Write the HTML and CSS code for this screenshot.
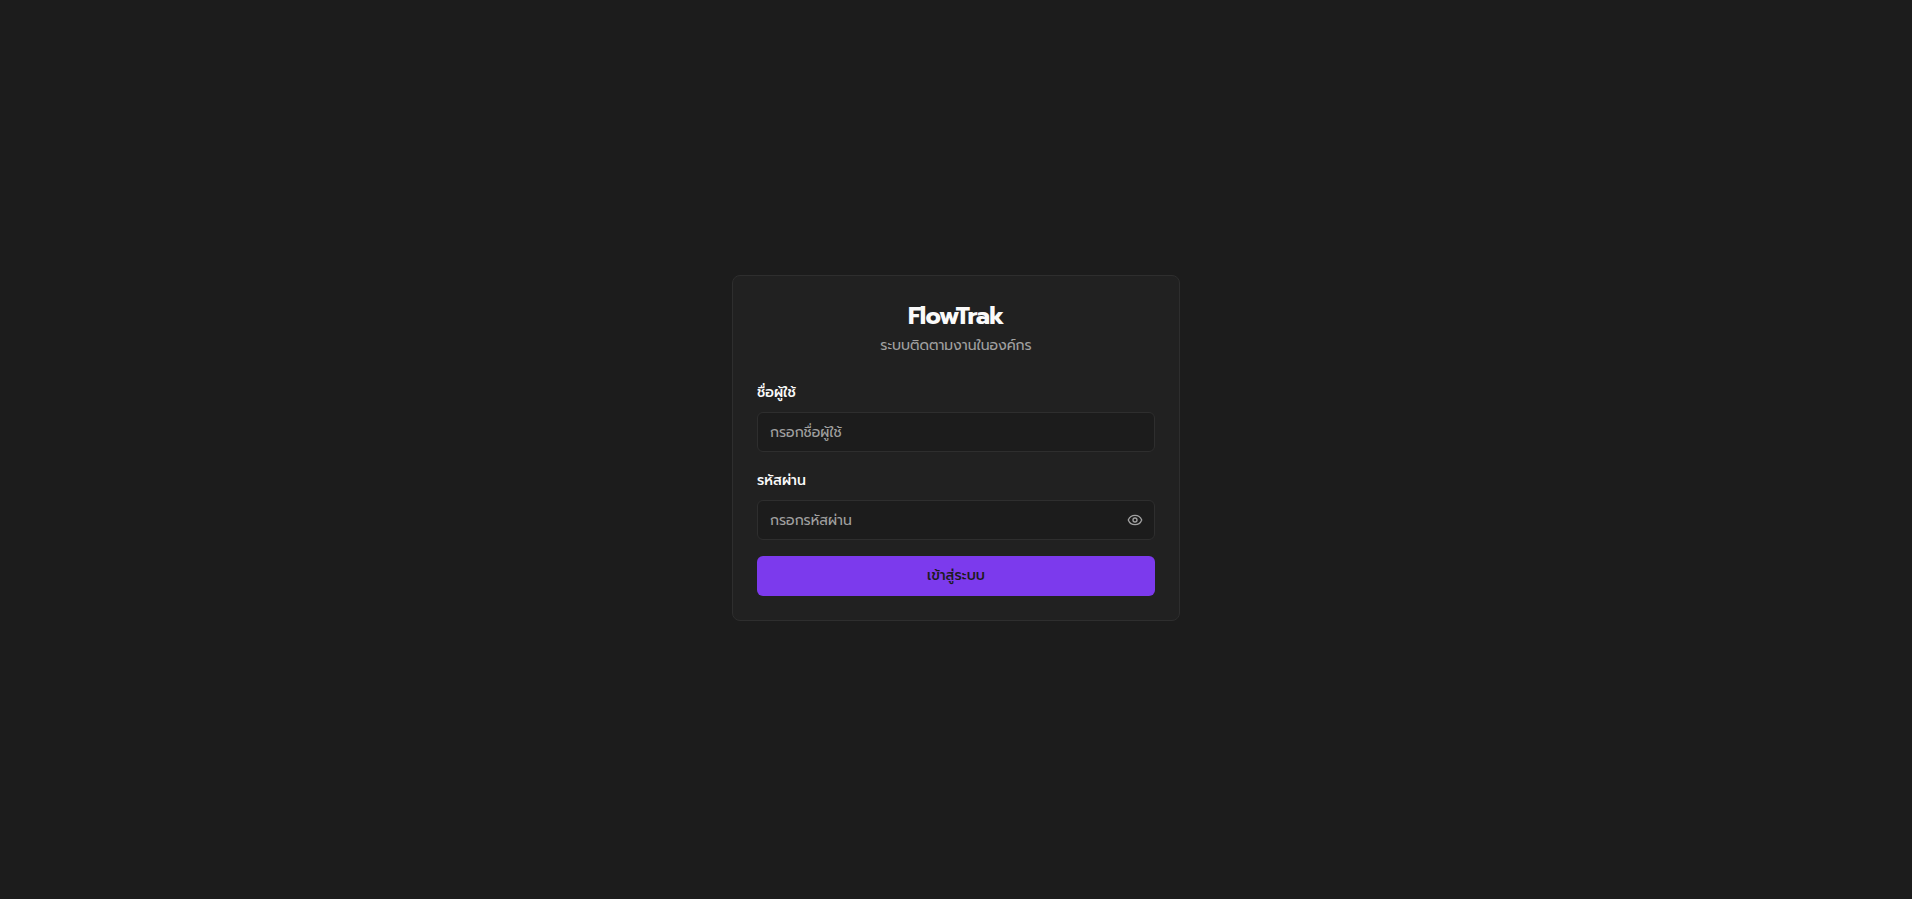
FILE: index.html
```html
<!DOCTYPE html>
<html lang="th">
<head>
    <meta charset="UTF-8">
    <meta name="viewport" content="width=device-width, initial-scale=1.0">
    <title>FlowTrak</title>
    <link rel="stylesheet" href="styles.css">
</head>
<body>
    <main class="login-card">
        <header class="login-header">
            <h1>FlowTrak</h1>
            <p>ระบบติดตามงานในองค์กร</p>
        </header>
        <form class="login-form">
            <div class="field">
                <label for="username">ชื่อผู้ใช้</label>
                <input type="text" id="username" name="username" placeholder="กรอกชื่อผู้ใช้" autocomplete="username">
            </div>
            <div class="field">
                <label for="password">รหัสผ่าน</label>
                <div class="password-box">
                    <input type="password" id="password" name="password" placeholder="กรอกรหัสผ่าน" autocomplete="current-password">
                    <button type="button" class="toggle-password" aria-label="แสดงรหัสผ่าน">
                        <svg width="16" height="16" viewBox="0 0 24 24" fill="none" stroke="currentColor" stroke-width="2" stroke-linecap="round" stroke-linejoin="round">
                            <path d="M2.062 12.348a1 1 0 0 1 0-.696 10.75 10.75 0 0 1 19.876 0 1 1 0 0 1 0 .696 10.75 10.75 0 0 1-19.876 0"/>
                            <circle cx="12" cy="12" r="3"/>
                        </svg>
                    </button>
                </div>
            </div>
            <button type="submit" class="submit-button">เข้าสู่ระบบ</button>
        </form>
    </main>
</body>
</html>
```

FILE: styles.css
```css
* {
    box-sizing: border-box;
}

body {
    display: flex;
    align-items: center;
    justify-content: center;
    min-height: 100vh;
    margin: 0;
    padding: 16px 16px 19px;
    background: #1c1c1c;
    color: #fafafa;
    font-family: Prompt, "Noto Sans", "Noto Sans Thai", sans-serif;
    font-size: 14px;
    line-height: 20px;
}

.login-card {
    width: 100%;
    max-width: 448px;
    padding: 24px;
    background: #212121;
    border: 1px solid #2e2e2e;
    border-radius: 8px;
}

.login-header {
    margin-bottom: 24px;
    text-align: center;
}

.login-header h1 {
    margin: 0 0 4px;
    font-size: 24px;
    font-weight: 700;
    line-height: 32px;
    letter-spacing: -0.025em;
}

.login-header p {
    margin: 0;
    color: #a1a1a1;
}

.login-form {
    display: flex;
    flex-direction: column;
    gap: 16px;
}

.field {
    display: flex;
    flex-direction: column;
    gap: 6px;
}

.field label {
    font-weight: 500;
    line-height: 26px;
}

.field input {
    width: 100%;
    height: 40px;
    padding: 8px 12px;
    background: #1c1c1c;
    border: 1px solid #2e2e2e;
    border-radius: 6px;
    color: #fafafa;
    font: inherit;
}

.field input::placeholder {
    color: #a1a1a1;
    opacity: 1;
}

.password-box {
    position: relative;
}

.password-box input {
    padding-right: 40px;
}

.toggle-password {
    position: absolute;
    top: 0;
    right: 0;
    display: flex;
    align-items: center;
    height: 100%;
    padding: 0 12px;
    background: none;
    border: 0;
    color: #a1a1a1;
    cursor: pointer;
}

.submit-button {
    height: 40px;
    padding: 8px 16px;
    background: #7c3aed;
    border: 0;
    border-radius: 6px;
    color: #1c1c1c;
    font: inherit;
    font-weight: 500;
    cursor: pointer;
}
```
